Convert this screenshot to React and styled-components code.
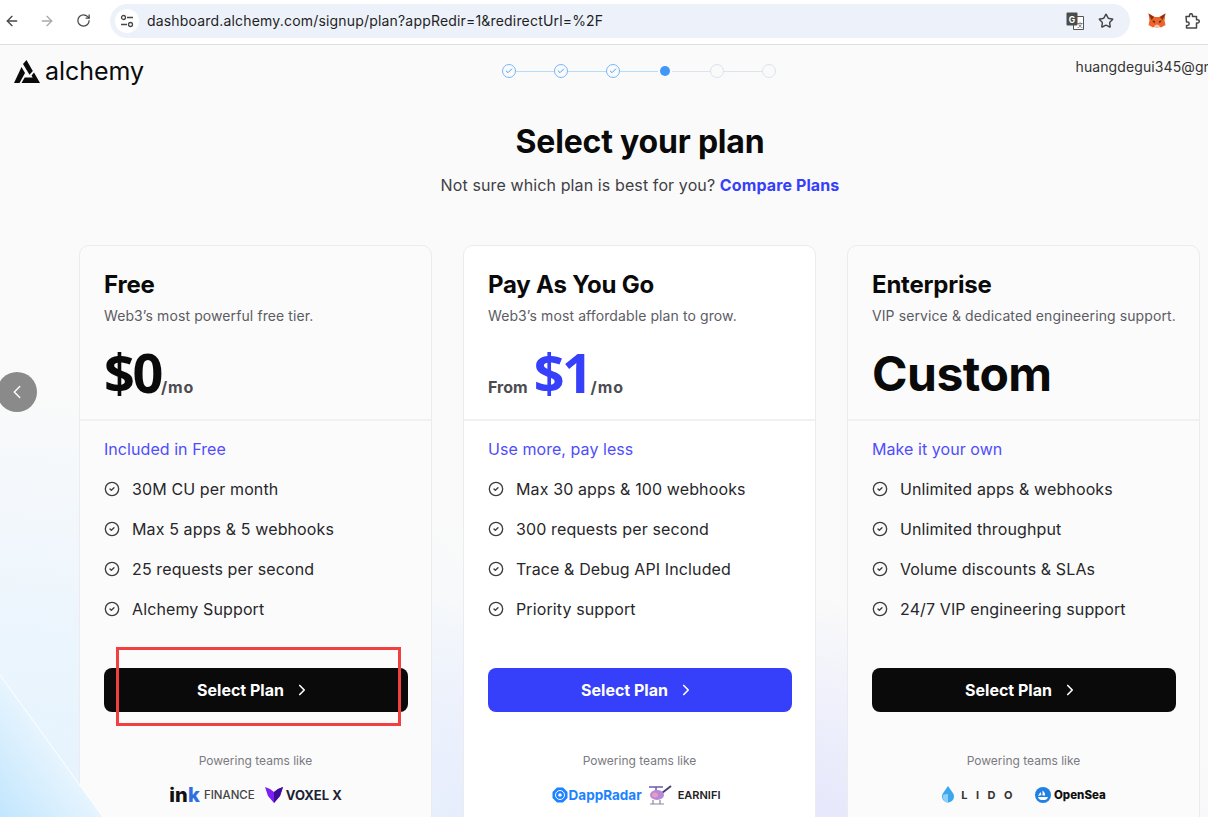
import React from "react";
import styled, { createGlobalStyle } from "styled-components";
import {
  ArrowLeft,
  ArrowRight,
  RotateCw,
  Star,
  ChevronLeft,
  ChevronRight,
  CircleCheck,
  Check
} from "lucide-react";

const GlobalStyle = createGlobalStyle`
  html, body {
    margin: 0;
    padding: 0;
    overflow: hidden;
    background: #fff;
    font-family: Inter, "Noto Sans", sans-serif;
  }
  * { box-sizing: border-box; }
`;

const Screen = styled.div`
  position: relative;
  width: 1208px;
  height: 817px;
  overflow: hidden;
  display: flex;
  flex-direction: column;
`;

const BrowserBar = styled.div`
  flex: none;
  height: 45px;
  display: flex;
  align-items: center;
  padding: 0 0 3px 4px;
  background: #fff;
  border-bottom: 1px solid #dedede;
  color: #474747;
`;

const NavButton = styled.span`
  width: 16px;
  margin-right: ${props => props.$gap}px;
  display: flex;
  color: ${props => (props.$disabled ? "#a9a9a9" : "#474747")};
`;

const UrlPill = styled.div`
  width: 1020px;
  height: 34px;
  margin-left: 18px;
  margin-right: 18px;
  padding: 0 16px 0 5px;
  display: flex;
  align-items: center;
  border-radius: 17px;
  background: #edf2fa;
`;

const TuneBadge = styled.span`
  width: 24px;
  height: 24px;
  border-radius: 50%;
  background: #fff;
  display: flex;
  align-items: center;
  justify-content: center;
`;

const UrlText = styled.span`
  flex: 1;
  margin-left: 8px;
  font-size: 14px;
  letter-spacing: 0.18px;
  color: #1f1f1f;
  white-space: nowrap;
`;

const PillIcons = styled.div`
  display: flex;
  align-items: center;
  gap: 14px;
`;

const ExtensionSlot = styled.span`
  display: flex;
  margin-right: 19px;
`;

const Page = styled.div`
  position: relative;
  flex: 1;
  width: 1280px;
  background:
    radial-gradient(640px 460px at 0px 800px, #e2f2fe 0%, rgba(232, 244, 254, 0.75) 50%, rgba(250, 250, 250, 0) 100%),
    radial-gradient(620px 300px at 640px 840px, #dbdffb 0%, rgba(225, 228, 252, 0.6) 55%, rgba(250, 250, 250, 0) 100%),
    #fafafa;
`;

const Streak = styled.div`
  position: absolute;
  left: 0;
  top: 630px;
  width: 103px;
  height: 142px;
  background: linear-gradient(
    to top right,
    #c2e6fd 0%,
    #e6f4fe calc(50% - 1px),
    rgba(255, 255, 255, 0.85) 50%,
    rgba(255, 255, 255, 0) calc(50% + 1px)
  );
`;

const TopRow = styled.header`
  position: relative;
  height: 52px;
  display: grid;
  grid-template-columns: minmax(0, 1fr) auto minmax(0, 1fr);
  padding: 0 17px 0 14px;
`;

const Logo = styled.div`
  display: flex;
  align-items: center;
  gap: 5px;
  height: 52px;
  color: #0a0a0a;
`;

const LogoWord = styled.span`
  font-size: 25px;
  font-weight: 400;
  letter-spacing: -0.05px;
`;

const Stepper = styled.div`
  display: flex;
  align-items: center;
  height: 52px;
`;

const StepDot = styled.span`
  width: 14px;
  height: 14px;
  border-radius: 50%;
  display: flex;
  align-items: center;
  justify-content: center;
  color: #4a9df8;
  border: 1.5px solid ${props => (props.$state === "done" ? "#74b8fb" : "#dbe3ee")};
  ${props =>
    props.$state === "active" &&
    `
    width: 10px;
    height: 10px;
    margin: 0 2px;
    border: 0;
    background: #3f97f8;
  `}
`;

const StepLine = styled.span`
  width: 38px;
  height: 1px;
  background: ${props => (props.$done ? "#b4dcfc" : "#dfe4ec")};
`;

const Email = styled.div`
  font-size: 14px;
  line-height: 44px;
  color: #333;
  padding-left: 300px;
  letter-spacing: 0.1px;
  white-space: nowrap;
`;

const Heading = styled.h1`
  margin: 25px 0 0;
  font-size: 32px;
  line-height: 40px;
  font-weight: 700;
  letter-spacing: -0.2px;
  text-align: center;
  color: #0a0a0a;
`;

const Subheading = styled.p`
  margin: 11px 0 0;
  font-size: 16px;
  line-height: 24px;
  letter-spacing: 0.11px;
  text-align: center;
  color: #3f3f46;
`;

const CompareLink = styled.a`
  color: #363ff9;
  font-weight: 700;
`;

const CardRow = styled.div`
  display: flex;
  gap: 31px;
  margin: 48px 0 0 79px;
`;

const Card = styled.section`
  width: 353px;
  height: 640px;
  flex: none;
  border: 1px solid #ececf0;
  border-radius: 10px;
  background: ${props => (props.$highlight ? "#fff" : "#fbfbfb")};
`;

const CardTop = styled.div`
  height: 175px;
  padding: 23px 24px 0;
  border-bottom: 2px solid #f1f1f3;
`;

const PlanName = styled.h2`
  margin: 0;
  font-size: 24px;
  line-height: 32px;
  font-weight: 700;
  letter-spacing: -0.2px;
  color: #0a0a0a;
`;

const PlanBlurb = styled.p`
  margin: 5px 0 0;
  font-size: 14px;
  line-height: 20px;
  letter-spacing: 0.1px;
  color: #5c5c64;
  white-space: nowrap;
`;

const PriceRow = styled.div`
  display: flex;
  align-items: baseline;
  margin-top: 14px;
  height: 64px;
  line-height: 64px;
`;

const Amount = styled.span`
  font-family: "Noto Sans", sans-serif;
  font-size: 54px;
  font-weight: 700;
  letter-spacing: -2.4px;
  color: ${props => (props.$accent ? "#363ff9" : "#0a0a0a")};
`;

const CustomPrice = styled.span`
  font-size: 48px;
  line-height: 68px;
  font-weight: 700;
  letter-spacing: -0.5px;
  color: #0a0a0a;
`;

const PriceUnit = styled.span`
  font-size: 16px;
  font-weight: 700;
  color: #4c4c52;
  letter-spacing: ${props => (props.$wide ? 0.9 : 0)}px;
  margin-left: ${props => props.$gap || 0}px;
  margin-right: ${props => props.$right || 0}px;
`;

const CardBody = styled.div`
  padding: 16px 24px 0;
`;

const IncludedLabel = styled.div`
  font-size: 16px;
  line-height: 24px;
  letter-spacing: 0.06px;
  color: #4f4dfb;
`;

const FeatureList = styled.ul`
  list-style: none;
  margin: 8px 0 0;
  padding: 0;
`;

const Feature = styled.li`
  height: 40px;
  display: flex;
  align-items: center;
  gap: 12px;
  font-size: 16px;
  letter-spacing: 0.12px;
  color: #27272a;
  svg {
    color: #3c3c40;
    flex: none;
  }
`;

const SelectButton = styled.button`
  width: 304px;
  height: 44px;
  margin-top: 39px;
  padding: 0 4px 0 0;
  display: flex;
  align-items: center;
  justify-content: center;
  gap: 9px;
  border: 0;
  border-radius: 8px;
  background: ${props => (props.$accent ? "#363ff9" : "#0a0a0a")};
  color: #fff;
  font-family: inherit;
  font-size: 16px;
  font-weight: 700;
`;

const Powering = styled.div`
  margin-top: 39px;
  text-align: center;
  font-size: 12px;
  line-height: 20px;
  color: #7a7a80;
`;

const LogoStrip = styled.div`
  margin-top: 12px;
  height: 24px;
  padding-right: ${props => props.$nudge || 0}px;
  display: flex;
  align-items: center;
  justify-content: center;
  gap: ${props => props.$gap || 8}px;
`;

const BrandText = styled.span`
  font-size: ${props => props.$size || 12}px;
  font-weight: ${props => props.$weight || 700};
  color: ${props => props.$color || "#1a1a2e"};
  letter-spacing: ${props => props.$spacing || 0}px;
  margin-left: ${props => props.$gap || 0}px;
  white-space: nowrap;
`;

const Brand = styled.span`
  display: flex;
  align-items: center;
`;

const BackButton = styled.button`
  position: absolute;
  left: -3px;
  top: 327px;
  width: 40px;
  height: 40px;
  padding: 0;
  border: 0;
  border-radius: 50%;
  background: #8a8a8a;
  color: #fff;
  display: flex;
  align-items: center;
  justify-content: center;
`;

const Annotation = styled.div`
  position: absolute;
  left: 116px;
  top: 602px;
  width: 285px;
  height: 79px;
  border: 3px solid #f23f3f;
`;

const TuneIcon = () => (
  <svg width="14" height="14" viewBox="0 0 14 14" fill="none" stroke="#474747" strokeWidth="1.3">
    <circle cx="3.5" cy="3.5" r="2" />
    <path d="M7 3.5h6M1 10.5h6" />
    <circle cx="10.5" cy="10.5" r="2" />
  </svg>
);

const TranslateIcon = () => (
  <svg width="18" height="18" viewBox="0 0 18 18">
    <path d="M7.500 4.500h10v13h-10z" fill="#fff" stroke="#555" strokeWidth="1" />
    <rect x="0.500" y="0.500" width="11" height="13" rx="1" fill="#4c4c4c" />
    <text x="2.800" y="10.500" fontSize="8.500" fontWeight="700" fill="#fff" fontFamily="Inter">G</text>
    <text x="11" y="14.500" fontSize="6" fill="#444" fontFamily="Noto Sans CJK SC">文</text>
  </svg>
);

const FoxIcon = () => (
  <svg width="18" height="16" viewBox="0 0 18 16">
    <path d="M0.500 0.500l6.500 3.500h4L17.500 .5l-1 7 1 4.500-4.500 2.500-2-1h-4l-2 1L.5 12l1-4.500z" fill="#f0632a" />
    <path d="M0.500 0.500L6 4 3.500 7zM17.500 0.500L12 4l2.500 3z" fill="#7a3413" />
    <path d="M4 7.500l3 .5-.500 2.500zM14 7.500l-3 .5.500 2.500z" fill="#5e2a10" />
    <path d="M6.500 12.500l2.500-1 2.500 1-.5 2.500H7z" fill="#e8c9b5" />
  </svg>
);

const PuzzleIcon = () => (
  <svg width="15" height="16" viewBox="0 0 15 16" fill="none" stroke="#474747" strokeWidth="1.5" strokeLinejoin="round">
    <path d="M1 3.500h3.500V2.200a1.500 1.500 0 0 1 3 0v1.300H11.500v3.200h1.200a1.600 1.600 0 0 1 0 3.200h-1.200v5H1.500v-2.500h1a1.700 1.700 0 0 0 0-3.400h-1z" />
  </svg>
);

const AlchemyMark = () => (
  <svg width="26" height="23" viewBox="0 0 26 23" fill="#0a0a0a">
    <path d="M12.500 0l6.300 11-3.300 3.700L9 4z" />
    <path d="M7.500 7l3.500 6L5.500 23H0z" />
    <path d="M17.500 15.500l2.500-3L26 23H7.500l3.200-5.500h8z" />
  </svg>
);

const InkLogo = () => (
  <Brand>
    <BrandText $size={20} $weight={800} $color="#111" $spacing={0.2}>in</BrandText>
    <BrandText $size={20} $weight={800} $color="#2f6fe0">k</BrandText>
    <BrandText $size={11.5} $weight={500} $color="#444" $gap={4}>FINANCE</BrandText>
  </Brand>
);

const VoxelLogo = () => (
  <Brand>
    <svg width="18" height="16" viewBox="0 0 18 16">
      <path d="M0 0l5 2 4 3 4-3 5-2-3 9-6 7-6-7z" fill="#7a1ff0" />
      <path d="M9 5l4-3 5-2-3 9-6 7z" fill="#3d0d9a" />
    </svg>
    <BrandText $size={13} $color="#1d2235" $gap={3}>VOXEL X</BrandText>
  </Brand>
);

const DappRadarLogo = () => (
  <Brand>
    <svg width="16" height="16" viewBox="0 0 16 16" fill="none">
      <path d="M5 .5h6L15.500 5v6L11 15.500H5L.5 11V5z" fill="#1c82ff" />
      <circle cx="8" cy="8" r="4.500" stroke="#fff" strokeWidth="1" />
      <circle cx="8" cy="8" r="1.800" fill="#fff" />
    </svg>
    <BrandText $size={13.500} $color="#1c82ff" $gap={1}>DappRadar</BrandText>
  </Brand>
);

const EarnifiLogo = () => (
  <Brand>
    <svg width="24" height="22" viewBox="0 0 24 22" fill="none">
      <path d="M1 3h14M8 3v4" stroke="#6a5ca8" strokeWidth="1.500" />
      <path d="M14 9l9-7" stroke="#4a3f78" strokeWidth="2" />
      <ellipse cx="9" cy="11" rx="7" ry="5" fill="#b78ad8" />
      <ellipse cx="7" cy="11" rx="3" ry="2.500" fill="#e79ac2" />
      <path d="M5 16v4M12 16v4M2 20h14" stroke="#8a8a9a" strokeWidth="1.200" />
    </svg>
    <BrandText $size={11} $weight={600} $color="#222" $gap={6}>EARNIFI</BrandText>
  </Brand>
);

const LidoLogo = () => (
  <Brand>
    <svg width="14" height="18" viewBox="0 0 14 18">
      <path d="M7 0l4.500 6.500a6 6 0 1 1-9 0z" fill="#3aa7ee" />
      <path d="M7 8v9a6 6 0 0 1-4.500-8.500z" fill="#8fd0f8" />
    </svg>
    <BrandText $size={11} $weight={700} $color="#333" $spacing={8.5} $gap={6}>LIDO</BrandText>
  </Brand>
);

const OpenSeaLogo = () => (
  <Brand>
    <svg width="16" height="16" viewBox="0 0 16 16">
      <circle cx="8" cy="8" r="8" fill="#2081e2" />
      <path d="M3 9l2.500-4 1 3zM7.500 3.500c2 1.500 3 3.500 2.500 5H7.500zM3 10h10c-.5 2-2 3-3.500 3h-3C5 13 3.500 12 3 10z" fill="#fff" />
    </svg>
    <BrandText $size={11.5} $weight={800} $color="#111" $gap={3}>OpenSea</BrandText>
  </Brand>
);

const plans = [
  {
    name: "Free",
    blurb: "Web3’s most powerful free tier.",
    label: "Included in Free",
    features: ["30M CU per month", "Max 5 apps & 5 webhooks", "25 requests per second", "Alchemy Support"],
    price: (
      <>
        <Amount>$0</Amount>
        <PriceUnit $wide>/mo</PriceUnit>
      </>
    ),
    logos: (
      <LogoStrip $gap={10}>
        <InkLogo />
        <VoxelLogo />
      </LogoStrip>
    )
  },
  {
    name: "Pay As You Go",
    blurb: "Web3’s most affordable plan to grow.",
    label: "Use more, pay less",
    features: ["Max 30 apps & 100 webhooks", "300 requests per second", "Trace & Debug API Included", "Priority support"],
    accent: true,
    price: (
      <>
        <PriceUnit $right={6}>From</PriceUnit>
        <Amount $accent>$1</Amount>
        <PriceUnit $wide>/mo</PriceUnit>
      </>
    ),
    logos: (
      <LogoStrip $gap={6} $nudge={7}>
        <DappRadarLogo />
        <EarnifiLogo />
      </LogoStrip>
    )
  },
  {
    name: "Enterprise",
    blurb: "VIP service & dedicated engineering support.",
    label: "Make it your own",
    features: ["Unlimited apps & webhooks", "Unlimited throughput", "Volume discounts & SLAs", "24/7 VIP engineering support"],
    price: <CustomPrice>Custom</CustomPrice>,
    logos: (
      <LogoStrip $gap={14}>
        <LidoLogo />
        <OpenSeaLogo />
      </LogoStrip>
    )
  }
];

const steps = ["done", "done", "done", "active", "todo", "todo"];

const App = () => (
  <Screen>
    <GlobalStyle />
    <BrowserBar>
      <NavButton $gap={19}><ArrowLeft size={16} /></NavButton>
      <NavButton $gap={21} $disabled><ArrowRight size={16} /></NavButton>
      <NavButton $gap={0}><RotateCw size={15} /></NavButton>
      <UrlPill>
        <TuneBadge><TuneIcon /></TuneBadge>
        <UrlText>dashboard.alchemy.com/signup/plan?appRedir=1&amp;redirectUrl=%2F</UrlText>
        <PillIcons>
          <TranslateIcon />
          <Star size={16} strokeWidth={2.2} />
        </PillIcons>
      </UrlPill>
      <ExtensionSlot><FoxIcon /></ExtensionSlot>
      <PuzzleIcon />
    </BrowserBar>
    <Page>
      <Streak />
      <TopRow>
        <Logo>
          <AlchemyMark />
          <LogoWord>alchemy</LogoWord>
        </Logo>
        <Stepper>
          {steps.map((state, i) => (
            <React.Fragment key={i}>
              {i > 0 && <StepLine $done={i < 4} />}
              <StepDot $state={state}>
                {state === "done" && <Check size={8} strokeWidth={3} />}
              </StepDot>
            </React.Fragment>
          ))}
        </Stepper>
        <Email>huangdegui345@gmail.com</Email>
      </TopRow>
      <Heading>Select your plan</Heading>
      <Subheading>
        Not sure which plan is best for you? <CompareLink>Compare Plans</CompareLink>
      </Subheading>
      <CardRow>
        {plans.map(plan => (
          <Card key={plan.name} $highlight={plan.accent}>
            <CardTop>
              <PlanName>{plan.name}</PlanName>
              <PlanBlurb>{plan.blurb}</PlanBlurb>
              <PriceRow>{plan.price}</PriceRow>
            </CardTop>
            <CardBody>
              <IncludedLabel>{plan.label}</IncludedLabel>
              <FeatureList>
                {plan.features.map(item => (
                  <Feature key={item}>
                    <CircleCheck size={16} strokeWidth={2} />
                    {item}
                  </Feature>
                ))}
              </FeatureList>
              <SelectButton $accent={plan.accent}>
                Select Plan
                <ChevronRight size={18} strokeWidth={2.2} />
              </SelectButton>
              <Powering>Powering teams like</Powering>
              {plan.logos}
            </CardBody>
          </Card>
        ))}
      </CardRow>
      <BackButton><ChevronLeft size={22} strokeWidth={1.6} /></BackButton>
      <Annotation />
    </Page>
  </Screen>
);

export default App;
